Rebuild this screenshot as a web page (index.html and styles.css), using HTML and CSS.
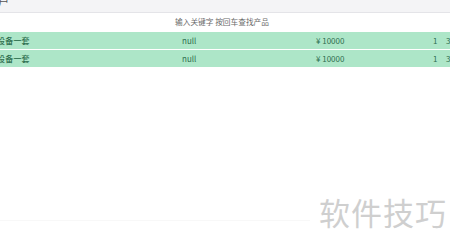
FILE: index.html
```html
<!DOCTYPE html>
<html>
<head>
<meta charset="utf-8">
<link rel="stylesheet" href="styles.css">
</head>
<body>
<div class="page">
  <div class="topbar"><span class="top-text">户</span></div>
  <div class="search">输入关键字 按回车查找产品</div>
  <div class="rows">
    <div class="row">
      <span class="c-name">设备一套</span>
      <span class="c-null">null</span>
      <span class="c-price">¥ 10000</span>
      <span class="c-qty">1</span>
      <span class="c-last">3</span>
    </div>
    <div class="row">
      <span class="c-name">设备一套</span>
      <span class="c-null">null</span>
      <span class="c-price">¥ 10000</span>
      <span class="c-qty">1</span>
      <span class="c-last">3</span>
    </div>
  </div>
  <div class="footer">
    <div class="fline"></div>
    <div class="watermark">软件技巧</div>
  </div>
</div>
</body>
</html>
```
FILE: styles.css
```css
html, body { margin: 0; padding: 0; background: #fff; }
body { width: 450px; height: 248px; overflow: hidden; font-family: "Noto Sans CJK SC", "Noto Sans", sans-serif; }
.page { display: flex; flex-direction: column; }
.topbar { height: 12px; background: #f4f4f6; border-bottom: 1px solid #e4e4e8; overflow: hidden; position: relative; }
.top-text { font-size: 11px; color: #555; line-height: 11px; display: block; margin-top: -4px; margin-left: -2px; }
.search { height: 19px; line-height: 18px; font-size: 7.7px; color: #6a6a6a; text-align: center; padding-right: 6px; }
.rows { display: flex; flex-direction: column; gap: 1px; }
.row { height: 17px; background: #ade6c8; display: flex; align-items: center; font-size: 8px; color: #2f6f4f; position: relative; overflow: hidden; }
.row > span { flex-shrink: 0; }
.c-name { width: 185px; margin-left: -3px; letter-spacing: 0.2px; font-weight: 500; }
.c-null { width: 134px; }
.c-price { width: 117px; }
.c-qty { width: 13px; }
.c-last { }
.footer { margin-top: 127px; position: relative; height: 40px; }
.fline { position: absolute; left: 0; top: 26px; width: 310px; height: 1px; background: #f8f8f8; }
.watermark { position: absolute; left: 319px; top: -2px; font-size: 31px; line-height: 40px; color: #cfcfcf; letter-spacing: 1px; }
```
